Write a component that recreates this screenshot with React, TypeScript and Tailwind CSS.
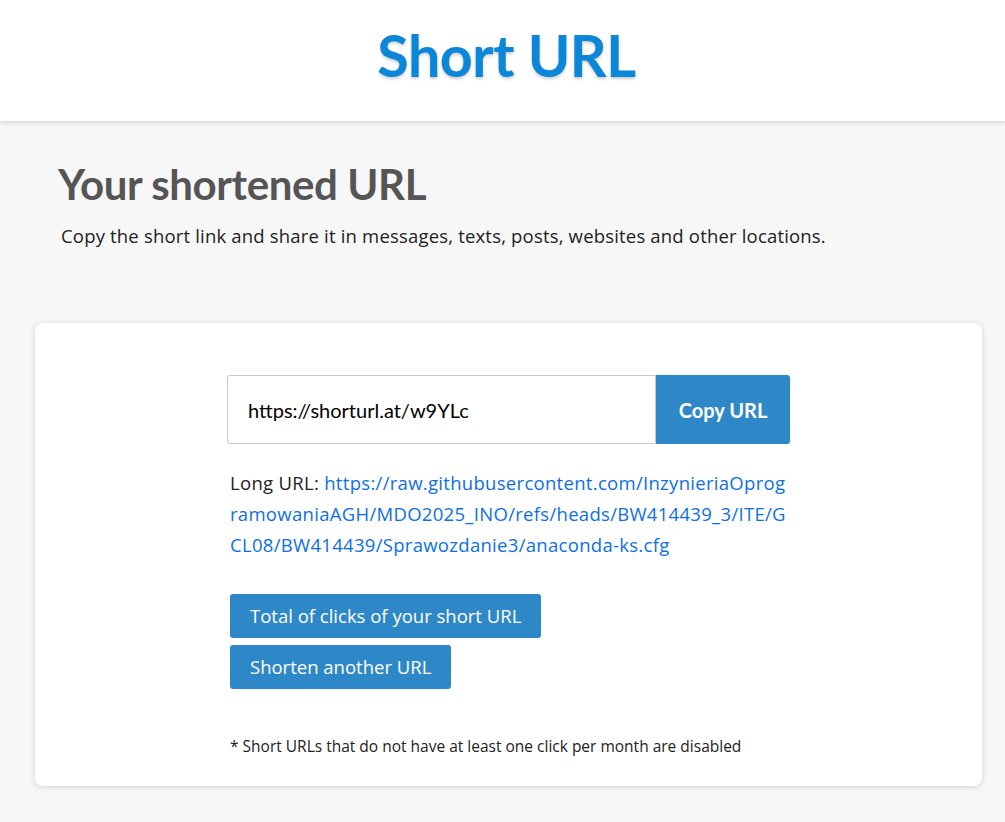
import React from 'react'

const sans = "font-['Open_Sans','Noto_Sans',sans-serif]"
const lato = "font-['Lato',sans-serif]"

export default function App() {
  return (
    <div className={`min-h-screen bg-[#f7f7f7] ${sans}`}>
      <header className="h-[121px] bg-white shadow-[0_2px_4px_rgba(0,0,0,0.12)] flex items-center justify-center">
        <h1 className={`text-[57.5px] font-bold leading-none text-[#0b87da] tracking-[-0.5px] [text-shadow:0_2px_3px_rgba(0,0,0,0.2)] mt-[-12px] ml-[8px] ${lato}`}>
          Short URL
        </h1>
      </header>

      <main className="pl-[35px] pr-[23px] pt-[42px] pb-[34px]">
        <section className="pl-[23px]">
          <h2 className={`text-[42px] font-bold leading-none text-[#555] tracking-[-0.4px] ${lato}`}>
            Your shortened URL
          </h2>
          <p className="mt-[18px] ml-[3px] text-[18.5px] leading-[25px] tracking-[0.18px] text-[#222]">
            Copy the short link and share it in messages, texts, posts, websites and other locations.
          </p>
        </section>

        <div className="mt-[75px] bg-white rounded-lg shadow-[0_1px_6px_rgba(0,0,0,0.15)] pt-[52px] pb-[28px]">
          <div className="mx-auto w-[563px]">
            <div className="flex h-[69px]">
              <div className={`flex-1 flex items-center border border-[#c8c8c8] rounded-l-[3px] bg-white pl-[20px] text-[20px] text-black ${lato}`}>
                https://shorturl.at/w9YLc
              </div>
              <button className={`w-[134px] bg-[#2e88c7] rounded-r-[3px] text-white text-[20px] font-bold ${lato}`}>
                Copy URL
              </button>
            </div>

            <p className="mt-[23px] ml-[3px] text-[18.5px] leading-[31px] tracking-[0.3px] text-[#222] break-all">
              Long URL:{' '}
              <a className="text-[#0d6fe8]">
                https://raw.githubusercontent.com/InzynieriaOprogramowaniaAGH/MDO2025_INO/refs/heads/BW414439_3/ITE/GCL08/BW414439/Sprawozdanie3/anaconda-ks.cfg
              </a>
            </p>

            <div className="mt-[34px] ml-[3px] flex flex-col items-start gap-[7px]">
              <button className="h-[44px] px-[20px] bg-[#2e88c7] rounded-[3px] text-white text-[18.5px]">
                Total of clicks of your short URL
              </button>
              <button className="h-[44px] px-[20px] bg-[#2e88c7] rounded-[3px] text-white text-[18.5px]">
                Shorten another URL
              </button>
            </div>

            <p className="mt-[46px] ml-[3px] text-[15.5px] text-[#222]">
              * Short URLs that do not have at least one click per month are disabled
            </p>
          </div>
        </div>
      </main>
    </div>
  )
}
